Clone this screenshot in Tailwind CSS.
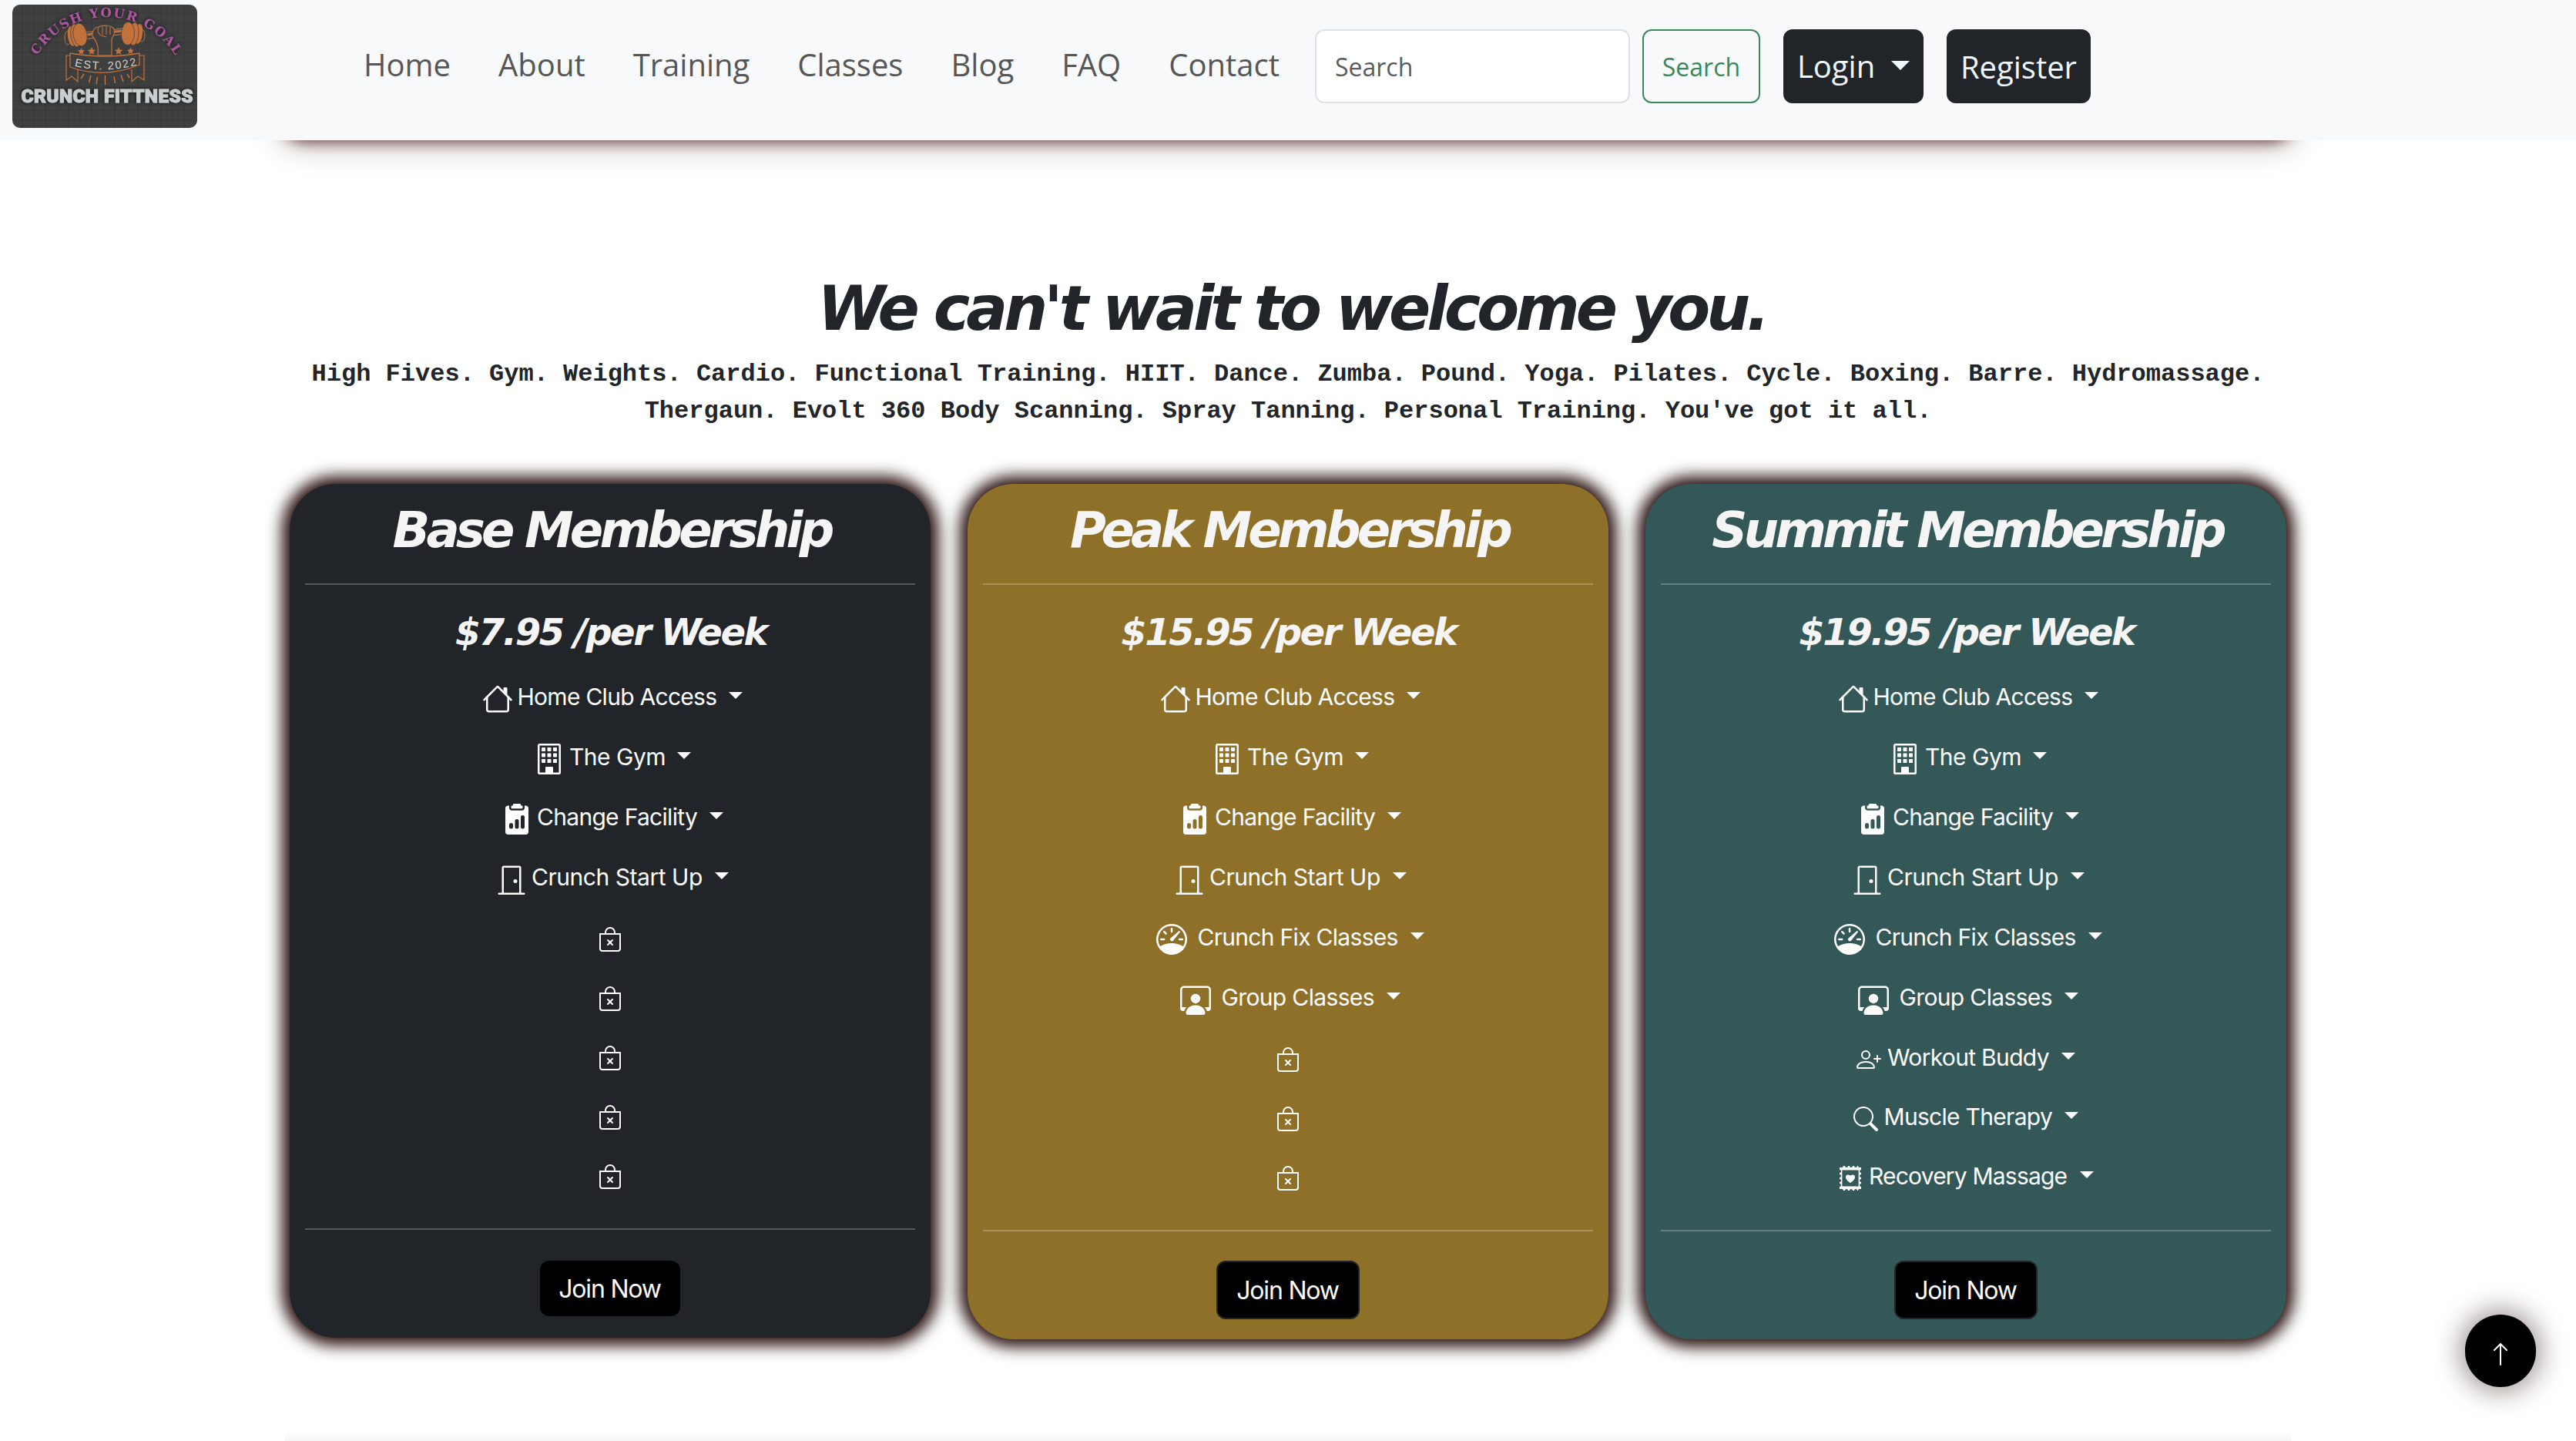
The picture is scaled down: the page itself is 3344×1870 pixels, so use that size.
<!DOCTYPE html>
<html lang="en">
<head>
<meta charset="utf-8">
<title>Crunch Fittness</title>
<script src="https://cdn.jsdelivr.net/npm/@tailwindcss/browser@4"></script>
</head>
<body class="relative flex h-[1870px] w-[3344px] flex-col overflow-hidden bg-white font-[Inter,sans-serif] text-[#212529]">

<!-- Icon sprite -->
<svg class="hidden">
  <symbol id="house" viewBox="0 0 16 16"><path d="M2 13.5V7h1v6.5a.5.5 0 0 0 .5.5h9a.5.5 0 0 0 .5-.5V7h1v6.5a1.5 1.5 0 0 1-1.5 1.5h-9A1.5 1.5 0 0 1 2 13.5zm11-11V6l-2-2V2.5a.5.5 0 0 1 .5-.5h1a.5.5 0 0 1 .5.5z"/><path d="M7.293 1.5a1 1 0 0 1 1.414 0l6.647 6.646a.5.5 0 0 1-.708.708L8 2.207 1.354 8.854a.5.5 0 1 1-.708-.708L7.293 1.5z"/></symbol>
  <symbol id="building" viewBox="0 0 16 16"><rect x="2.5" y=".5" width="11" height="15" rx=".5" fill="none" stroke="currentColor"/><path d="M4.3 2h1.4a.3.3 0 0 1 .3.3v1.4a.3.3 0 0 1-.3.3H4.300a.3.3 0 0 1-.3-.3V2.300a.3.3 0 0 1 .3-.3zM7.300 2h1.400a.3.3 0 0 1 .3.3v1.400a.3.3 0 0 1-.3.3H7.300a.3.3 0 0 1-.3-.3V2.300a.3.3 0 0 1 .3-.3zM10.300 2h1.400a.3.3 0 0 1 .3.3v1.400a.3.3 0 0 1-.3.3h-1.400a.3.3 0 0 1-.3-.3V2.300a.3.3 0 0 1 .3-.3zM4.300 5h1.400a.3.3 0 0 1 .3.3v1.400a.3.3 0 0 1-.3.3H4.300a.3.3 0 0 1-.3-.3V5.300a.3.3 0 0 1 .3-.3zM7.300 5h1.400a.3.3 0 0 1 .3.3v1.400a.3.3 0 0 1-.3.3H7.300a.3.3 0 0 1-.3-.3V5.300a.3.3 0 0 1 .3-.3zM10.300 5h1.400a.3.3 0 0 1 .3.3v1.400a.3.3 0 0 1-.3.3h-1.400a.3.3 0 0 1-.3-.3V5.300a.3.3 0 0 1 .3-.3zM4.300 8h1.400a.3.3 0 0 1 .3.3v1.400a.3.3 0 0 1-.3.3H4.300a.3.3 0 0 1-.3-.3V8.300a.3.3 0 0 1 .3-.3zM7.300 8h1.400a.3.3 0 0 1 .3.3v1.400a.3.3 0 0 1-.3.3H7.300a.3.3 0 0 1-.3-.3V8.300a.3.3 0 0 1 .3-.3zM10.300 8h1.400a.3.3 0 0 1 .3.3v1.400a.3.3 0 0 1-.3.3h-1.400a.3.3 0 0 1-.3-.3V8.300a.3.3 0 0 1 .3-.3zM6 12.500a.5.5 0 0 1 .5-.5h3a.5.5 0 0 1 .5.5V15.500H6z"/></symbol>
  <symbol id="clipboard" viewBox="0 0 16 16"><path d="M10 .5a.5.5 0 0 0-.5-.5h-3a.5.5 0 0 0-.5.5.5.5 0 0 1-.5.5.5.5 0 0 0-.5.5V2a.5.5 0 0 0 .5.5h5A.5.5 0 0 0 11 2v-.5a.5.5 0 0 0-.5-.5.5.5 0 0 1-.5-.5Z"/><path d="M4.085 1H3.5A1.5 1.5 0 0 0 2 2.500v12A1.500 1.500 0 0 0 3.500 16h9a1.500 1.500 0 0 0 1.500-1.500v-12A1.500 1.500 0 0 0 12.500 1h-.585c.055.156.085.325.085.5V2a1.500 1.500 0 0 1-1.500 1.500h-5A1.500 1.500 0 0 1 4 2v-.5c0-.175.03-.344.085-.5ZM10 7a1 1 0 1 1 2 0v5a1 1 0 1 1-2 0V7Zm-6 4a1 1 0 1 1 2 0v1a1 1 0 1 1-2 0v-1Zm4-3a1 1 0 0 1 1 1v3a1 1 0 1 1-2 0V9a1 1 0 0 1 1-1Z" fill-rule="evenodd"/></symbol>
  <symbol id="door" viewBox="0 0 16 16"><path fill-rule="evenodd" d="M3 2a1 1 0 0 1 1-1h8a1 1 0 0 1 1 1v13h1.5a.5.5 0 0 1 0 1h-13a.5.5 0 0 1 0-1H3V2zm1 13h8V2H4v13z"/><path d="M9 9a1 1 0 1 0 2 0 1 1 0 0 0-2 0z"/></symbol>
  <symbol id="speed" viewBox="0 0 16 16"><path d="M8 2a.5.5 0 0 1 .5.5V4a.5.5 0 0 1-1 0V2.5A.5.5 0 0 1 8 2zM3.732 3.732a.5.5 0 0 1 .707 0l.915.914a.5.5 0 1 1-.708.708l-.914-.915a.5.5 0 0 1 0-.707zM2 8a.5.5 0 0 1 .5-.5h1.586a.5.5 0 0 1 0 1H2.5A.5.5 0 0 1 2 8zm9.5 0a.5.5 0 0 1 .5-.5h1.5a.5.5 0 0 1 0 1H12a.5.5 0 0 1-.5-.5zm.754-4.246a.389.389 0 0 0-.527-.02L7.547 7.31A.91.91 0 1 0 8.85 8.569l3.434-4.297a.389.389 0 0 0-.029-.518z"/><path fill-rule="evenodd" d="M6.664 15.889A8 8 0 1 1 9.336.11a8 8 0 0 1-2.672 15.78zm-4.665-4.283A11.945 11.945 0 0 1 8 10c2.186 0 4.236.585 6.001 1.606a7 7 0 1 0-12.002 0z"/></symbol>
  <symbol id="workspace" viewBox="0 0 16 16"><path d="M4 16s-1 0-1-1 1-4 5-4 5 3 5 4-1 1-1 1H4Zm4-5.95a2.5 2.5 0 1 0 0-5 2.5 2.5 0 0 0 0 5Z"/><path d="M2 1a2 2 0 0 0-2 2v9.5A1.5 1.5 0 0 0 1.5 14h.653a5.373 5.373 0 0 1 1.066-2H1V3a1 1 0 0 1 1-1h12a1 1 0 0 1 1 1v9h-2.219c.554.654.89 1.373 1.066 2h.653a1.5 1.5 0 0 0 1.5-1.5V3a2 2 0 0 0-2-2H2Z"/></symbol>
  <symbol id="person-plus" viewBox="0 0 16 16"><path d="M6 8a3 3 0 1 0 0-6 3 3 0 0 0 0 6zm2-3a2 2 0 1 1-4 0 2 2 0 0 1 4 0zm4 8c0 1-1 1-1 1H1s-1 0-1-1 1-4 6-4 6 3 6 4zm-1-.004c-.001-.246-.154-.986-.832-1.664C9.516 10.68 8.289 10 6 10c-2.29 0-3.516.68-4.168 1.332-.678.678-.83 1.418-.832 1.664h10z"/><path d="M13.500 5a.5.5 0 0 1 .5.5V7h1.500a.5.5 0 0 1 0 1H14v1.500a.5.5 0 0 1-1 0V8h-1.500a.5.5 0 0 1 0-1H13V5.500a.5.5 0 0 1 .5-.5z"/></symbol>
  <symbol id="search" viewBox="0 0 16 16"><path d="M11.742 10.344a6.5 6.5 0 1 0-1.397 1.398h-.001c.03.04.062.078.098.115l3.85 3.85a1 1 0 0 0 1.415-1.414l-3.85-3.85a1.007 1.007 0 0 0-.115-.1zM12 6.5a5.5 5.5 0 1 1-11 0 5.500 5.500 0 0 1 11 0z"/></symbol>
  <symbol id="postage" viewBox="0 0 16 16"><path fill-rule="evenodd" d="M2.5 1a1 1 0 0 0 1-1h1a1 1 0 0 0 2 0h1a1 1 0 0 0 2 0h1a1 1 0 0 0 2 0h.5a1 1 0 0 0 1 1H15v1.500a1 1 0 0 0 0 2v1a1 1 0 0 0 0 2v1a1 1 0 0 0 0 2v1a1 1 0 0 0 0 2V15h-1a1 1 0 0 0-1 1h-.5a1 1 0 0 0-2 0h-1a1 1 0 0 0-2 0h-1a1 1 0 0 0-2 0h-1a1 1 0 0 0-1-1H1v-1.500a1 1 0 0 0 0-2v-1a1 1 0 0 0 0-2v-1a1 1 0 0 0 0-2v-1a1 1 0 0 0 0-2V1zM2.700 2.700v10.600h10.600V2.700z"/><path d="M8 11C2.900 8 5.200 4.300 8 6.300 10.800 4.300 13.100 8 8 11z"/></symbol>
  <symbol id="bag-x" viewBox="0 0 16 16"><path d="M6.146 8.146a.5.5 0 0 1 .708 0L8 9.293l1.146-1.147a.5.5 0 1 1 .708.708L8.707 10l1.147 1.146a.5.5 0 0 1-.708.708L8 10.707l-1.146 1.147a.5.5 0 0 1-.708-.708L7.293 10 6.146 8.854a.5.5 0 0 1 0-.708z"/><path fill-rule="evenodd" d="M8 1a2.5 2.5 0 0 1 2.500 2.500V4h-5v-.5A2.500 2.500 0 0 1 8 1zm3.500 3v-.5a3.500 3.500 0 1 0-7 0V4H1v10a2 2 0 0 0 2 2h10a2 2 0 0 0 2-2V4h-3.500zM2 5h12v9a1 1 0 0 1-1 1H3a1 1 0 0 1-1-1V5z"/></symbol>
  <symbol id="arrow-up" viewBox="0 0 16 16"><path d="M8 15a.5.5 0 0 0 .5-.5V2.207l3.146 3.147a.5.5 0 0 0 .708-.708l-4-4a.5.5 0 0 0-.708 0l-4 4a.5.5 0 1 0 .708.708L7.500 2.207V14.500a.5.5 0 0 0 .5.5z"/></symbol>
</svg>

<!-- Navbar -->
<header class="relative z-10 flex h-[182px] shrink-0 items-start bg-[#f8f9fb] pl-4 font-['Open_Sans',sans-serif] text-[40px]">
  <svg class="mt-[6px] h-[160px] w-[240px] shrink-0 rounded-[10px] bg-[#3f3f3f]" viewBox="0 0 240 160">
    <defs>
      <path id="arc" d="M18 118 A104 102 0 0 1 226 118"/>
      <path id="est" d="M78 79 Q120 90 164 78"/>
      <filter id="glow" x="-10%" y="-30%" width="120%" height="160%"><feDropShadow dx="0" dy="0" stdDeviation="2.500" flood-color="#111" flood-opacity=".9"/></filter>
    </defs>
    <path d="M13 0v160M28 0v160M43 0v160M58 0v160M73 0v160M88 0v160M103 0v160M118 0v160M133 0v160M148 0v160M163 0v160M178 0v160M193 0v160M208 0v160M223 0v160M0 11h240M0 24h240M0 37h240M0 49h240M0 62h240M0 75h240M0 87h240M0 100h240M0 112h240M0 125h240M0 137h240M0 150h240" stroke="#393939" stroke-width="1" fill="none"/>
    <text class="font-['DejaVu_Serif',serif] font-bold" font-size="16.500" fill="#a9559f" filter="url(#glow)" textLength="214" lengthAdjust="spacing" text-anchor="middle"><textPath href="#arc" startOffset="50%" textLength="214">CRUSH YOUR GOAL</textPath></text>
    <g fill="#c2723a">
      <path d="M92 36 L146 31 L146 38 L92 45z" fill="#3f3f3f" stroke="#c2723a" stroke-width="1.200"/>
      <path d="M93 40L108 37M133 35L146 34" stroke="#c2723a" stroke-width="3"/>
      <ellipse cx="72" cy="43" rx="4" ry="9" fill="none" stroke="#c2723a"/>
      <ellipse cx="77" cy="41" rx="5" ry="13" transform="rotate(-8 77 41)"/>
      <ellipse cx="82" cy="40" rx="6" ry="15" transform="rotate(-8 82 40)" stroke="#3f3f3f" stroke-width=".7"/>
      <ellipse cx="88" cy="39" rx="9" ry="15" transform="rotate(-10 88 39)" stroke="#3f3f3f" stroke-width=".7"/>
      <ellipse cx="168" cy="40" rx="4" ry="8" fill="none" stroke="#c2723a"/>
      <ellipse cx="164" cy="38" rx="5" ry="13" transform="rotate(8 164 38)"/>
      <ellipse cx="158" cy="38" rx="6" ry="15" transform="rotate(5 158 38)" stroke="#3f3f3f" stroke-width=".7"/>
      <ellipse cx="150" cy="37.500" rx="8.500" ry="15" transform="rotate(3 150 37.500)" stroke="#3f3f3f" stroke-width=".7"/>
    </g>
    <path d="M104 41C103 35 107 29 112 29C118 26 127 27 131 30C134 35 132 40 129 44V66H111C112 56 111 49 104 41z" fill="#3f3f3f" stroke="#c2723a" stroke-width="1.200"/>
    <path d="M112 29Q109 36 115 40L122 42M117 29v10M122 28v11M127 29v10" fill="none" stroke="#c2723a" stroke-width="1.100"/>
    <g fill="#c2723a">
      <path d="M89.500 56l1.300 3 3.200.3-2.400 2.100.7 3.200-2.800-1.700-2.800 1.700.7-3.200-2.400-2.100 3.200-.3z"/>
      <path d="M103 55l1.500 3.400 3.700.4-2.800 2.400.8 3.600-3.200-1.900-3.200 1.900.8-3.600-2.800-2.400 3.700-.4z"/>
      <path d="M138 55l1.500 3.400 3.700.4-2.800 2.400.8 3.600-3.200-1.900-3.200 1.900.8-3.600-2.800-2.400 3.700-.4z"/>
      <path d="M153.500 55.500l1.300 3 3.200.3-2.400 2.100.7 3.200-2.800-1.700-2.800 1.700.7-3.200-2.400-2.100 3.200-.3z"/>
    </g>
    <path d="M75 66H70V98L77 93L85 100V84M164 66H171V98L163 93L155 100V84" fill="none" stroke="#c2723a" stroke-width="1.200"/>
    <path d="M75 63Q120 71 165 63V78Q120 97 75 81z" fill="#3f3f3f" stroke="#c2723a" stroke-width="1.300"/>
    <path d="M93 90l-4 6M102 92l-2.500 9M110.500 94l-1.500 9M120.500 92v12M132 93l1.500 9M141 91l3 9M149 90l3 5" stroke="#c2723a" stroke-width="1.500" fill="none"/>
    <text class="font-['Liberation_Sans_Narrow','Liberation_Sans',sans-serif]" font-size="14.500" fill="#d0d2d2" textLength="82" text-anchor="middle"><textPath href="#est" startOffset="50%" textLength="82">EST. 2022</textPath></text>
    <text x="11.500" y="127" class="font-['Roboto',sans-serif] font-black" font-size="24.500" fill="#c9cfd1" stroke="#c9cfd1" stroke-width=".9" filter="url(#glow)" textLength="223" lengthAdjust="spacing">CRUNCH FITTNESS</text>
  </svg>

  <nav class="mt-[57px] ml-[216px] flex gap-[62px] leading-[54px] text-[#565656]">
    <a>Home</a><a>About</a><a>Training</a><a>Classes</a><a>Blog</a><a>FAQ</a><a>Contact</a>
  </nav>

  <div class="mt-[38px] ml-[46px] flex">
    <div class="h-24 w-[409px] rounded-[12px] border-2 border-[#dee2e6] bg-white pl-6 text-[32px] leading-[93px] text-[#595c5f]">Search</div>
    <button class="ml-4 h-24 w-[153px] rounded-[12px] border-2 border-[#3c8859] text-center text-[32px] leading-[93px] text-[#3c8859]">Search</button>
    <button class="ml-[30px] flex h-24 w-[182px] rounded-[12px] bg-[#212529] pl-[18px] leading-[95px] text-[#f0f8ff]">Login<span class="mt-[41px] ml-[21px] border-x-[12px] border-t-[12px] border-x-transparent border-t-[#f0f8ff]"></span></button>
    <button class="ml-[30px] h-24 w-[187px] rounded-[12px] bg-[#212529] text-center leading-[95px] text-[#f0f8ff]">Register</button>
  </div>
</header>

<!-- Tail of the previous section -->
<div class="mx-[376px] -mt-[110px] h-[100px] shrink-0 rounded-b-[20px] bg-[#212529] shadow-[0_0_20px_10px_#4a1e1a,0_0_36px_22px_rgba(60,30,30,0.2)]"></div>

<h1 class="mt-[181px] pl-[10px] text-center font-['DejaVu_Sans',sans-serif] text-[80px] leading-[96px] font-bold tracking-[-4.93px] italic">We can't wait to welcome you.</h1>
<p class="mt-[13px] text-center font-['Liberation_Mono',monospace] text-[32px] leading-[48px] font-bold">High Fives. Gym. Weights. Cardio. Functional Training. HIIT. Dance. Zumba. Pound. Yoga. Pilates. Cycle. Boxing. Barre. Hydromassage.<br>Thergaun. Evolt 360 Body Scanning. Spray Tanning. Personal Training. You've got it all.</p>

<main class="mx-[376px] mt-[70px] flex shrink-0 items-start gap-12 text-[30px] leading-[56px] whitespace-nowrap text-white">

  <!-- Base -->
  <section class="flex w-[832px] flex-col rounded-[60px] bg-[#212529] pt-[22px] pb-7 shadow-[0_0_20px_10px_#27100e]">
    <h2 class="pl-1 text-center font-['DejaVu_Sans',sans-serif] text-[64px] leading-[77px] font-bold tracking-[-4.85px] text-[#f5f5f5] italic">Base Membership</h2>
    <div class="mx-5 mt-[30px] h-0.5 bg-[#f5f5f5]/25"></div>
    <h3 class="mt-8 pl-0.5 text-center font-['DejaVu_Sans',sans-serif] text-[48px] leading-[58px] font-bold tracking-[-2.4px] text-[#f5f5f5] italic">$7.95 /per Week</h3>
    <ul class="mt-[27px]">
      <li class="flex h-[78px] pl-[250px]"><svg class="mt-[11px] size-10 fill-current"><use href="#house"/></svg><span class="ml-[5.5px] tracking-[-0.72px]">Home Club Access</span><i class="mt-[22px] ml-[16px] h-[9px] border-x-[9px] border-t-[9px] border-x-transparent border-t-white"></i></li>
      <li class="flex h-[78px] pl-[317px]"><svg class="mt-[11px] size-10 fill-current"><use href="#building"/></svg><span class="ml-[6px] tracking-[-0.5px]">The Gym</span><i class="mt-[22px] ml-[15px] h-[9px] border-x-[9px] border-t-[9px] border-x-transparent border-t-white"></i></li>
      <li class="flex h-[78px] pl-[275px]"><svg class="mt-[11px] size-10 fill-current"><use href="#clipboard"/></svg><span class="ml-[6px] tracking-[-0.7px]">Change Facility</span><i class="mt-[22px] ml-[16px] h-[9px] border-x-[9px] border-t-[9px] border-x-transparent border-t-white"></i></li>
      <li class="flex h-[78px] pl-[268px]"><svg class="mt-[11px] size-10 fill-current"><use href="#door"/></svg><span class="ml-[6px] tracking-[-0.46px]">Crunch Start Up</span><i class="mt-[22px] ml-[16px] h-[9px] border-x-[9px] border-t-[9px] border-x-transparent border-t-white"></i></li>
      <li class="flex h-[77px] justify-center"><svg class="mt-[15px] size-8 fill-current"><use href="#bag-x"/></svg></li>
      <li class="flex h-[77px] justify-center"><svg class="mt-[15px] size-8 fill-current"><use href="#bag-x"/></svg></li>
      <li class="flex h-[77px] justify-center"><svg class="mt-[15px] size-8 fill-current"><use href="#bag-x"/></svg></li>
      <li class="flex h-[77px] justify-center"><svg class="mt-[15px] size-8 fill-current"><use href="#bag-x"/></svg></li>
      <li class="flex h-[77px] justify-center"><svg class="mt-[15px] size-8 fill-current"><use href="#bag-x"/></svg></li>
    </ul>
    <div class="mx-5 mt-[21px] h-0.5 bg-[#f5f5f5]/25"></div>
    <button class="mt-10 h-[72px] w-[182px] self-center rounded-[12px] bg-black pr-px text-[32px] leading-[74px] tracking-[-1.2px]">Join Now</button>
  </section>

  <!-- Peak -->
  <section class="flex w-[832px] flex-col rounded-[60px] bg-[#8f7029] pt-[22px] pb-[26px] shadow-[0_0_20px_10px_#27100e]">
    <h2 class="pl-1 text-center font-['DejaVu_Sans',sans-serif] text-[64px] leading-[77px] font-bold tracking-[-4.85px] text-[#f5f5f5] italic">Peak Membership</h2>
    <div class="mx-5 mt-[30px] h-0.5 bg-[#f5f5f5]/25"></div>
    <h3 class="mt-8 pl-0.5 text-center font-['DejaVu_Sans',sans-serif] text-[48px] leading-[58px] font-bold tracking-[-2.4px] text-[#f5f5f5] italic">$15.95 /per Week</h3>
    <ul class="mt-[27px]">
      <li class="flex h-[78px] pl-[250px]"><svg class="mt-[11px] size-10 fill-current"><use href="#house"/></svg><span class="ml-[5.5px] tracking-[-0.72px]">Home Club Access</span><i class="mt-[22px] ml-[16px] h-[9px] border-x-[9px] border-t-[9px] border-x-transparent border-t-white"></i></li>
      <li class="flex h-[78px] pl-[317px]"><svg class="mt-[11px] size-10 fill-current"><use href="#building"/></svg><span class="ml-[6px] tracking-[-0.5px]">The Gym</span><i class="mt-[22px] ml-[15px] h-[9px] border-x-[9px] border-t-[9px] border-x-transparent border-t-white"></i></li>
      <li class="flex h-[78px] pl-[275px]"><svg class="mt-[11px] size-10 fill-current"><use href="#clipboard"/></svg><span class="ml-[6px] tracking-[-0.7px]">Change Facility</span><i class="mt-[22px] ml-[16px] h-[9px] border-x-[9px] border-t-[9px] border-x-transparent border-t-white"></i></li>
      <li class="flex h-[78px] pl-[268px]"><svg class="mt-[11px] size-10 fill-current"><use href="#door"/></svg><span class="ml-[6px] tracking-[-0.46px]">Crunch Start Up</span><i class="mt-[22px] ml-[16px] h-[9px] border-x-[9px] border-t-[9px] border-x-transparent border-t-white"></i></li>
      <li class="flex h-[78px] pl-[245px]"><svg class="mt-[11px] size-10 fill-current"><use href="#speed"/></svg><span class="ml-[13.5px] tracking-[-0.7px]">Crunch Fix Classes</span><i class="mt-[22px] ml-[16px] h-[9px] border-x-[9px] border-t-[9px] border-x-transparent border-t-white"></i></li>
      <li class="flex h-[78px] pl-[276px]"><svg class="mt-[11px] size-10 fill-current"><use href="#workspace"/></svg><span class="ml-[13.5px] tracking-[-0.64px]">Group Classes</span><i class="mt-[22px] ml-[16.5px] h-[9px] border-x-[9px] border-t-[9px] border-x-transparent border-t-white"></i></li>
      <li class="flex h-[77px] justify-center"><svg class="mt-[15px] size-8 fill-current"><use href="#bag-x"/></svg></li>
      <li class="flex h-[77px] justify-center"><svg class="mt-[15px] size-8 fill-current"><use href="#bag-x"/></svg></li>
      <li class="flex h-[77px] justify-center"><svg class="mt-[15px] size-8 fill-current"><use href="#bag-x"/></svg></li>
    </ul>
    <div class="mx-5 mt-[21px] h-0.5 bg-[#f5f5f5]/25"></div>
    <button class="mt-[38px] h-[76px] w-[186px] self-center rounded-[12px] border-2 border-[#212529] bg-black pr-px text-[32px] leading-[74px] tracking-[-1.2px]">Join Now</button>
  </section>

  <!-- Summit -->
  <section class="flex w-[832px] flex-col rounded-[60px] bg-[#345757] pt-[22px] pb-[26px] shadow-[0_0_20px_10px_#27100e]">
    <h2 class="pl-1 text-center font-['DejaVu_Sans',sans-serif] text-[64px] leading-[77px] font-bold tracking-[-4.85px] text-[#f5f5f5] italic">Summit Membership</h2>
    <div class="mx-5 mt-[30px] h-0.5 bg-[#f5f5f5]/25"></div>
    <h3 class="mt-8 pl-0.5 text-center font-['DejaVu_Sans',sans-serif] text-[48px] leading-[58px] font-bold tracking-[-2.4px] text-[#f5f5f5] italic">$19.95 /per Week</h3>
    <ul class="mt-[27px]">
      <li class="flex h-[78px] pl-[250px]"><svg class="mt-[11px] size-10 fill-current"><use href="#house"/></svg><span class="ml-[5.5px] tracking-[-0.72px]">Home Club Access</span><i class="mt-[22px] ml-[16px] h-[9px] border-x-[9px] border-t-[9px] border-x-transparent border-t-white"></i></li>
      <li class="flex h-[78px] pl-[317px]"><svg class="mt-[11px] size-10 fill-current"><use href="#building"/></svg><span class="ml-[6px] tracking-[-0.5px]">The Gym</span><i class="mt-[22px] ml-[15px] h-[9px] border-x-[9px] border-t-[9px] border-x-transparent border-t-white"></i></li>
      <li class="flex h-[78px] pl-[275px]"><svg class="mt-[11px] size-10 fill-current"><use href="#clipboard"/></svg><span class="ml-[6px] tracking-[-0.7px]">Change Facility</span><i class="mt-[22px] ml-[16px] h-[9px] border-x-[9px] border-t-[9px] border-x-transparent border-t-white"></i></li>
      <li class="flex h-[78px] pl-[268px]"><svg class="mt-[11px] size-10 fill-current"><use href="#door"/></svg><span class="ml-[6px] tracking-[-0.46px]">Crunch Start Up</span><i class="mt-[22px] ml-[16px] h-[9px] border-x-[9px] border-t-[9px] border-x-transparent border-t-white"></i></li>
      <li class="flex h-[78px] pl-[245px]"><svg class="mt-[11px] size-10 fill-current"><use href="#speed"/></svg><span class="ml-[13.5px] tracking-[-0.7px]">Crunch Fix Classes</span><i class="mt-[22px] ml-[16px] h-[9px] border-x-[9px] border-t-[9px] border-x-transparent border-t-white"></i></li>
      <li class="flex h-[78px] pl-[276px]"><svg class="mt-[11px] size-10 fill-current"><use href="#workspace"/></svg><span class="ml-[13.5px] tracking-[-0.64px]">Group Classes</span><i class="mt-[22px] ml-[16.5px] h-[9px] border-x-[9px] border-t-[9px] border-x-transparent border-t-white"></i></li>
      <li class="flex h-[77px] pl-[274px]"><svg class="mt-[15px] size-8 fill-current"><use href="#person-plus"/></svg><span class="ml-[8px] tracking-[-0.68px]">Workout Buddy</span><i class="mt-[22px] ml-[16px] h-[9px] border-x-[9px] border-t-[9px] border-x-transparent border-t-white"></i></li>
      <li class="flex h-[77px] pl-[270px]"><svg class="mt-[15px] size-8 fill-current"><use href="#search"/></svg><span class="ml-[7.5px] tracking-[-0.7px]">Muscle Therapy</span><i class="mt-[22px] ml-[16px] h-[9px] border-x-[9px] border-t-[9px] border-x-transparent border-t-white"></i></li>
      <li class="flex h-[77px] pl-[250px]"><svg class="mt-[15px] size-8 fill-current"><use href="#postage"/></svg><span class="ml-[8px] tracking-[-0.8px]">Recovery Massage</span><i class="mt-[22px] ml-[16.5px] h-[9px] border-x-[9px] border-t-[9px] border-x-transparent border-t-white"></i></li>
    </ul>
    <div class="mx-5 mt-[21px] h-0.5 bg-[#f5f5f5]/25"></div>
    <button class="mt-[38px] h-[76px] w-[186px] self-center rounded-[12px] border-2 border-[#212529] bg-black pr-px text-[32px] leading-[74px] tracking-[-1.2px]">Join Now</button>
  </section>
</main>

<!-- Soft top edge of the next section -->
<div class="mx-[370px] mt-[118px] h-[14px] shrink-0 bg-linear-to-b from-transparent to-black/4"></div>

<!-- Back to top -->
<a class="absolute right-[52px] bottom-[70px] flex h-[94px] w-[92px] justify-center rounded-full bg-black pt-[36px] text-white shadow-[0_0_32px_8px_rgba(39,16,14,0.4)]"><svg class="size-8 fill-current"><use href="#arrow-up"/></svg></a>

</body>
</html>
